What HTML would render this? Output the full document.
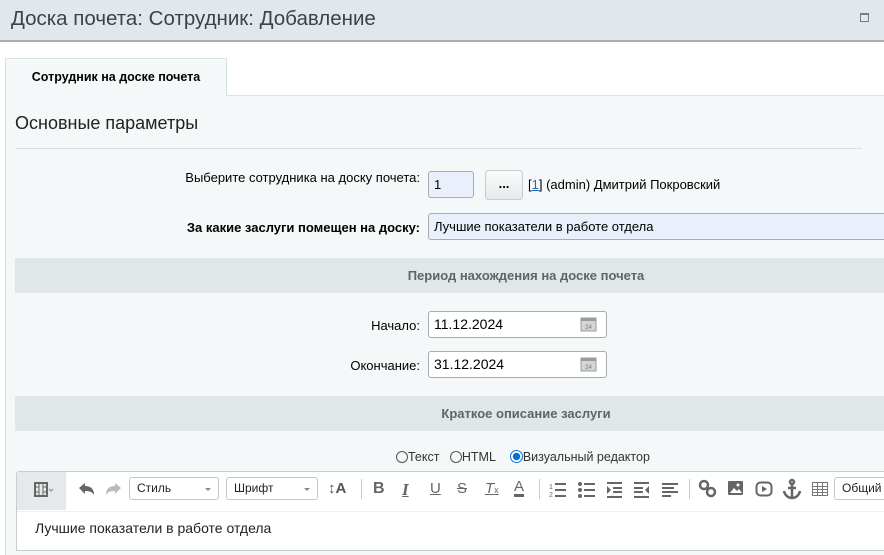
<!DOCTYPE html>
<html><head><meta charset="utf-8"><style>
*{box-sizing:border-box}
body{margin:0;width:884px;height:550px;overflow:hidden;background:#fff;font-family:"Liberation Sans",sans-serif;font-size:13px;color:#000;position:relative}
.abs{position:absolute}
.hdr{left:0;top:0;width:884px;height:42px;background:#e1e8eb;border-bottom:2px solid #a8adaf}
.hdr .t{left:11px;top:7px;font-size:20.5px;color:#3c4346}
.tab{left:5px;top:58px;width:222px;height:38px;background:#f5f8f9;border:1px solid #d6e2e8;border-bottom:none;font-size:12.5px;font-weight:bold;text-align:center;line-height:36px;z-index:2}
.cont{left:5px;top:95px;width:890px;height:460px;background:#f5f8f9;border-top:1px solid #d6e2e8;border-left:1px solid #d6e2e8}
.lbl{text-align:right;width:420px;left:0}
.inp{background:#e9f0fb;border:1px solid #a5acb2;border-radius:3px;padding-left:5px}
.inpw{background:#fff;border:1px solid #a5acb2;border-radius:3px;padding-left:5px}
.sec{left:15px;width:1022px;height:35px;background:#e0e7e9;color:#5c6669;font-weight:bold;text-align:center;line-height:35px}
.tb svg{position:absolute}
.sel{background:#fff;border:1px solid #c4c7c9;border-radius:3px;height:23px;top:477px;font-size:12px;line-height:21px;padding-left:7px;color:#222}
.sel:after{content:"";position:absolute;right:7px;top:10px;border:3px solid transparent;border-top:3px solid #888}
</style></head><body>
<div class="abs hdr"><div class="abs t">Доска почета: Сотрудник: Добавление</div>
<div class="abs" style="left:860px;top:13px;width:9px;height:9px;border:1px solid #6d809a;border-top-width:2px"></div></div>
<div class="abs tab">Сотрудник на доске почета</div>
<div class="abs cont"></div>
<div class="abs" style="left:15px;top:113px;font-size:18px;color:#222">Основные параметры</div>
<div class="abs" style="left:15px;top:148px;width:847px;height:1px;background:#dde1e3"></div>

<div class="abs lbl" style="top:170px">Выберите сотрудника на доску почета:</div>
<div class="abs inp" style="left:428px;top:171px;width:46px;height:27px;line-height:25px">1</div>
<div class="abs" style="left:485px;top:170px;width:38px;height:30px;border:1px solid #c6cbce;border-radius:4px;background:linear-gradient(#fafbfb,#e6eaeb);text-align:center;line-height:26px;font-weight:bold">...</div>
<div class="abs" style="left:528px;top:177px">[<span style="color:#2067b0;text-decoration:underline">1</span>] (admin) Дмитрий Покровский</div>

<div class="abs lbl" style="top:220px;font-weight:bold">За какие заслуги помещен на доску:</div>
<div class="abs inp" style="left:428px;top:213px;width:470px;height:27px;line-height:25px">Лучшие показатели в работе отдела</div>

<div class="abs sec" style="top:258px">Период нахождения на доске почета</div>

<div class="abs lbl" style="top:318px">Начало:</div>
<div class="abs inpw" style="left:428px;top:311px;width:179px;height:27px;line-height:25px;font-size:14px">11.12.2024</div>
<div class="abs lbl" style="top:358px">Окончание:</div>
<div class="abs inpw" style="left:428px;top:351px;width:179px;height:27px;line-height:25px;font-size:14px">31.12.2024</div>
<svg class="abs" style="left:580px;top:315px" width="18" height="18"><rect x="1" y="3" width="15" height="13" fill="#d4d6d6" stroke="#9a9c9c"/><rect x="1" y="3" width="15" height="3" fill="#9a9c9c"/><text x="8.5" y="14" font-size="6" text-anchor="middle" fill="#777" font-family="Liberation Sans">24</text></svg>
<svg class="abs" style="left:580px;top:355px" width="18" height="18"><rect x="1" y="3" width="15" height="13" fill="#d4d6d6" stroke="#9a9c9c"/><rect x="1" y="3" width="15" height="3" fill="#9a9c9c"/><text x="8.5" y="14" font-size="6" text-anchor="middle" fill="#777" font-family="Liberation Sans">24</text></svg>

<div class="abs sec" style="top:396px">Краткое описание заслуги</div>

<div class="abs" style="left:396px;top:450px;font-size:12.5px;color:#333;white-space:nowrap">
<span style="display:inline-block;width:12px;height:12px;border:1px solid #555;border-radius:50%;vertical-align:-2px"></span>Текст&nbsp;&nbsp;
<span style="display:inline-block;width:12px;height:12px;border:1px solid #555;border-radius:50%;vertical-align:-2px"></span>HTML&nbsp;&nbsp;&nbsp;
<span style="display:inline-block;width:13px;height:13px;border:1px solid #0a70d8;border-radius:50%;vertical-align:-2px;background:radial-gradient(#0a70d8 45%,#fff 50%)"></span>Визуальный редактор</div>

<div class="abs" style="left:16px;top:471px;width:880px;height:80px;background:#fff;border:1px solid #c8ccce;border-radius:3px 0 0 0"></div>
<div class="abs" style="left:17px;top:472px;width:49px;height:38px;background:#e6e9eb"></div>
<div class="abs" style="left:17px;top:511px;width:870px;height:1px;background:#eef0f1"></div>
<div class="tb">
<svg style="left:34px;top:482px" width="20" height="16"><rect x="1" y="1" width="12" height="13" fill="none" stroke="#666" stroke-width="2"/><path d="M5 1v13M9 1v13M1 5h4M1 10h4M9 5h4M9 10h4" stroke="#666"/><path d="M15 7l2 2 2-2" fill="none" stroke="#888"/></svg>
<svg style="left:78px;top:482px" width="18" height="14"><path d="M1 6l6-5v3c6 0 9 3 9 9-2-3-4-4-9-4v3z" fill="#666"/></svg>
<svg style="left:104px;top:482px" width="18" height="14"><path d="M17 6l-6-5v3c-6 0-9 3-9 9 2-3 4-4 9-4v3z" fill="#bbb"/></svg>
</div>
<div class="abs sel" style="left:129px;width:90px">Стиль</div>
<div class="abs sel" style="left:226px;width:92px">Шрифт</div>
<div class="abs" style="left:328px;top:480px;font-weight:bold;font-size:15px;color:#555">↕A</div>
<div class="abs" style="left:361px;top:479px;width:1px;height:20px;background:#ccc"></div>
<div class="abs" style="left:373px;top:480px;font-weight:bold;font-size:16px;color:#666">B</div>
<div class="abs" style="left:402px;top:480px;font-style:italic;font-family:'Liberation Serif',serif;font-weight:bold;font-size:17px;color:#666;text-decoration:underline">I</div>
<div class="abs" style="left:430px;top:480px;font-size:15px;color:#666;text-decoration:underline">U</div>
<div class="abs" style="left:457px;top:480px;font-size:15px;color:#666;text-decoration:line-through">S</div>
<div class="abs" style="left:485px;top:480px;font-style:italic;font-size:15px;color:#666;text-decoration:underline">T<span style="font-size:9px;font-style:normal">x</span></div>
<div class="abs" style="left:514px;top:479px;font-size:15px;color:#666;border-bottom:3px solid #666;line-height:15px">A</div>
<div class="abs" style="left:539px;top:479px;width:1px;height:20px;background:#ccc"></div>
<svg class="abs" style="left:549px;top:481px" width="100" height="18"><g fill="#666"><text x="0" y="8" font-size="7" font-family="Liberation Sans">1</text><text x="0" y="16" font-size="7" font-family="Liberation Sans">2</text><rect x="6" y="2" width="11" height="2"/><rect x="6" y="8" width="11" height="2"/><rect x="6" y="14" width="11" height="2"/>
<circle cx="31" cy="3" r="2"/><circle cx="31" cy="9" r="2"/><circle cx="31" cy="15" r="2"/><rect x="35" y="2" width="11" height="2"/><rect x="35" y="8" width="11" height="2"/><rect x="35" y="14" width="11" height="2"/>
<rect x="58" y="1" width="15" height="2"/><rect x="64" y="6" width="9" height="2"/><rect x="64" y="10" width="9" height="2"/><rect x="58" y="15" width="15" height="2"/><path d="M58 5l4 4-4 4z"/>
<rect x="85" y="1" width="15" height="2"/><rect x="85" y="6" width="9" height="2"/><rect x="85" y="10" width="9" height="2"/><rect x="85" y="15" width="15" height="2"/><path d="M100 5l-4 4 4 4z"/></g></svg>
<svg class="abs" style="left:662px;top:482px" width="16" height="16"><g fill="#666"><rect x="0" y="1" width="16" height="2"/><rect x="0" y="5" width="12" height="2"/><rect x="0" y="9" width="16" height="2"/><rect x="0" y="13" width="9" height="2"/></g></svg>
<div class="abs" style="left:689px;top:479px;width:1px;height:20px;background:#ccc"></div>
<svg class="abs" style="left:698px;top:479px" width="20" height="20"><g fill="none" stroke="#666" stroke-width="2.5"><circle cx="6" cy="6" r="4"/><circle cx="13" cy="13" r="4"/></g></svg>
<svg class="abs" style="left:728px;top:481px" width="16" height="15"><rect x="0" y="0" width="15" height="14" rx="1" fill="#666"/><path d="M2 12l4-5 3 3 2-2 3 4z" fill="#fff"/><circle cx="10" cy="4" r="1.5" fill="#fff"/></svg>
<svg class="abs" style="left:755px;top:481px" width="19" height="16"><rect x="1.5" y="1.5" width="15" height="13" rx="4" fill="none" stroke="#666" stroke-width="2"/><path d="M7 5v6l5-3z" fill="#666"/></svg>
<svg class="abs" style="left:781px;top:478px" width="22" height="22"><g fill="none" stroke="#666" stroke-width="2.5"><circle cx="11" cy="4" r="2"/><path d="M11 6v14M3 13c1 5 5 7 8 7s7-2 8-7M7 10h8"/></g></svg>
<svg class="abs" style="left:812px;top:482px" width="17" height="15"><g fill="none" stroke="#777"><rect x="0.5" y="0.5" width="15" height="13"/><path d="M0 4.5h16M0 7.5h16M0 10.5h16M5.5 0v14M10.5 0v14"/></g></svg>
<div class="abs sel" style="left:834px;width:70px;font-size:12px">Общий</div>
<div class="abs" style="left:35px;top:520px;font-size:14px;color:#222">Лучшие показатели в работе отдела</div>
</body></html>
